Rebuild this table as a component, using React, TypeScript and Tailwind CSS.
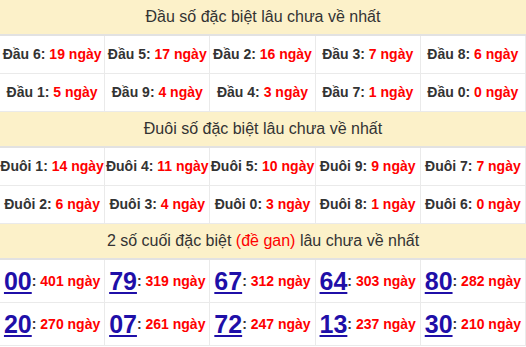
import React from "react";

const dau1 = [
  ["Đầu 6", "19"], ["Đầu 5", "17"], ["Đầu 2", "16"], ["Đầu 3", "7"], ["Đầu 8", "6"],
  ["Đầu 1", "5"], ["Đầu 9", "4"], ["Đầu 4", "3"], ["Đầu 7", "1"], ["Đầu 0", "0"],
];
const duoi = [
  ["Đuôi 1", "14"], ["Đuôi 4", "11"], ["Đuôi 5", "10"], ["Đuôi 9", "9"], ["Đuôi 7", "7"],
  ["Đuôi 2", "6"], ["Đuôi 3", "4"], ["Đuôi 0", "3"], ["Đuôi 8", "1"], ["Đuôi 6", "0"],
];
const gan = [
  ["00", "401"], ["79", "319"], ["67", "312"], ["64", "303"], ["80", "282"],
  ["20", "270"], ["07", "261"], ["72", "247"], ["13", "237"], ["30", "210"],
];

function Header({ children }: { children: React.ReactNode }) {
  return (
    <div className="h-[36px] bg-[#fcf1c9] border-b-2 border-[#e2e2e2] flex items-center justify-center text-[16px] text-[#333]">
      {children}
    </div>
  );
}

function SmallGrid({ data }: { data: string[][] }) {
  return (
    <div className="grid grid-cols-5">
      {data.map(([a, b], i) => (
        <div
          key={i}
          className="h-[38px] border-b border-r border-[#eaeaea] flex items-center justify-center font-bold text-[14px] whitespace-nowrap text-[#333]"
        >
          <span>{a}:&nbsp;</span>
          <span className="text-[#ff0000]">{b} ngày</span>
        </div>
      ))}
    </div>
  );
}

export default function App() {
  return (
    <div
      className="w-[526px] h-[347px] overflow-hidden bg-white"
      style={{ fontFamily: '"Liberation Sans", Arial, sans-serif' }}
    >
      <Header>Đầu số đặc biệt lâu chưa về nhất</Header>
      <SmallGrid data={dau1} />
      <Header>Đuôi số đặc biệt lâu chưa về nhất</Header>
      <SmallGrid data={duoi} />
      <Header>
        2 số cuối đặc biệt&nbsp;<span className="text-[#ff0000]">(đề gan)</span>&nbsp;lâu chưa về nhất
      </Header>
      <div className="grid grid-cols-5">
        {gan.map(([n, d], i) => (
          <div
            key={i}
            className="h-[43px] border-b border-r border-[#eaeaea] flex items-center justify-center font-bold whitespace-nowrap text-[#333]"
          >
            <span className="text-[25px] text-[#1f0fa8] underline decoration-2 underline-offset-2 leading-none">{n}</span>
            <span className="text-[14px]">:&nbsp;</span>
            <span className="text-[14px] text-[#ff0000]">{d} ngày</span>
          </div>
        ))}
      </div>
    </div>
  );
}
